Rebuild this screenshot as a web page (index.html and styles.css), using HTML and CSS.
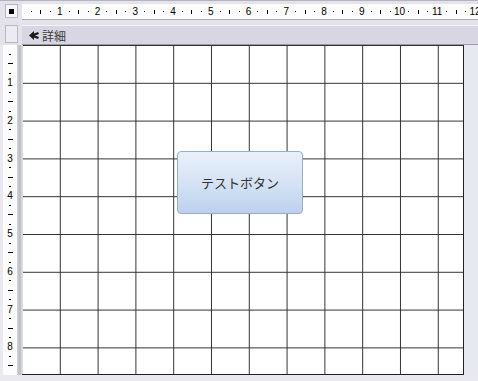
FILE: index.html
```html
<!DOCTYPE html>
<html lang="ja">

<head>
    <meta charset="UTF-8">
    <meta name="viewport" content="width=device-width, initial-scale=1.0">
    <title>フォーム デザイン</title>
    <link rel="stylesheet" href="styles.css">
</head>

<body>
    <div class="designer">
        <!-- top row: form selector + horizontal ruler -->
        <div class="top-row">
            <div class="corner"><div class="form-selector"><span class="dot"></span></div></div>
            <div class="h-ruler" id="hRuler"></div>
        </div>

        <!-- section header -->
        <div class="section-row">
            <div class="corner"><div class="section-selector"></div></div>
            <div class="section-bar">
                <svg class="section-icon" width="10" height="9" viewBox="0 0 10 9">
                    <path d="M0 4.5 L5 0 L5 2.5 L9 1 L10 3 L6 4.5 L10 6 L9 8 L5 6.5 L5 9 Z" fill="#1a1a1a" />
                </svg>
                <span class="section-title">詳細</span>
            </div>
        </div>

        <!-- detail body -->
        <div class="body-row">
            <div class="v-ruler" id="vRuler"></div>
            <div class="edge"></div>
            <div class="canvas">
                <button class="test-button">テストボタン</button>
            </div>
            <div class="outside"></div>
        </div>

        <div class="bottom-strip"></div>
    </div>

    <script>
        // build ruler marks: dot, tick, dot, number for every centimetre
        const hRuler = document.getElementById('hRuler');
        const vRuler = document.getElementById('vRuler');

        function fillRuler(ruler, slots, dir) {
            for (let i = 1; i <= slots; i++) {
                const slot = document.createElement('span');
                slot.className = 'slot';
                if (i % 4 === 0) {
                    slot.textContent = i / 4;
                    slot.classList.add('num');
                } else if (i % 2 === 0) {
                    slot.innerHTML = '<i class="' + dir + '-tick long"></i>';
                } else {
                    slot.innerHTML = '<i class="' + dir + '-tick"></i>';
                }
                ruler.appendChild(slot);
            }
        }

        fillRuler(hRuler, 48, 'h');
        fillRuler(vRuler, 35, 'v');
    </script>
</body>

</html>
```

FILE: styles.css
```css
body {
    margin: 0;
    background: #e9e9ef;
    font-family: "Liberation Sans", Arial, sans-serif;
}

.designer {
    width: 478px;
    height: 381px;
    display: flex;
    flex-direction: column;
    overflow: hidden;
    background: #e9e9ef;
}

/* ---------- top ruler row ---------- */
.top-row {
    height: 25px;
    display: flex;
    box-sizing: border-box;
    border-top: 1px solid #b4b4bc;
    background: #e4e3ec;
}

.corner {
    width: 22px;
    flex: none;
    display: flex;
    justify-content: center;
}

.form-selector {
    margin-top: 3px;
    width: 13px;
    height: 14px;
    box-sizing: border-box;
    border: 1px solid #b8b8c0;
    background: #f6f6f8;
    display: flex;
    align-items: center;
    justify-content: center;
}

.form-selector .dot {
    width: 5px;
    height: 5px;
    background: #000;
}

.h-ruler {
    flex: 1;
    margin-top: 3px;
    height: 15px;
    background: #fcfcfc;
    border-bottom: 1px solid #a9a9b2;
    display: flex;
    align-items: center;
    padding-left: 4.7px;
    overflow: hidden;
}

.h-ruler .slot {
    flex: none;
    width: 9.45px;
    height: 15px;
    font-size: 10px;
    line-height: 15px;
    color: #000;
    display: flex;
    justify-content: center;
    align-items: center;
}

.h-tick {
    display: block;
    width: 1px;
    height: 1px;
    background: #000;
}

.h-tick.long {
    height: 4px;
}

/* ---------- section header ---------- */
.section-row {
    height: 20px;
    display: flex;
    background: #e4e3ec;
}

.section-selector {
    width: 13px;
    height: 18px;
    box-sizing: border-box;
    border: 1px solid #b8b8c0;
    background: #ecebf2;
}

.section-bar {
    flex: 1;
    display: flex;
    align-items: center;
    gap: 3px;
    padding-left: 7px;
    background: #d8d6e3;
    border-top: 1px solid #f4f4f8;
    border-bottom: 1px solid #9a9aa6;
    box-sizing: border-box;
}

.section-title {
    font-family: "Noto Sans CJK JP", sans-serif;
    font-size: 12px;
    color: #3a3a3a;
}

/* ---------- detail body ---------- */
.body-row {
    height: 330px;
    display: flex;
}

.v-ruler {
    width: 14px;
    margin-left: 3px;
    background: #fcfcfc;
    display: flex;
    flex-direction: column;
    padding-top: 4.7px;
    overflow: hidden;
    flex: none;
}

.v-ruler .slot {
    flex: none;
    height: 9.45px;
    display: flex;
    align-items: center;
    justify-content: center;
    font-size: 10px;
    color: #000;
}

.v-tick {
    display: block;
    width: 2px;
    height: 1px;
    background: #000;
}

.v-tick.long {
    width: 5px;
}

.edge {
    width: 5px;
    flex: none;
    background: linear-gradient(90deg, #d4d4dc, #b8b8c2 60%, #e0e0e6);
}

.canvas {
    position: relative;
    width: 442px;
    flex: none;
    box-sizing: border-box;
    border-right: 1px solid #222;
    border-bottom: 1px solid #222;
    background-color: #fff;
    background-image:
        linear-gradient(90deg, #333 1px, transparent 1px),
        linear-gradient(180deg, #333 1px, transparent 1px);
    background-size: 37.8px 37.8px;
    background-position: 0 0;
    /* hide the grid line that would sit on the left edge */
    box-shadow: inset 1px 0 0 #dcdce2;
}

.outside {
    flex: 1;
    background: #e6e9f0;
}

.test-button {
    position: absolute;
    left: 155px;
    top: 106px;
    width: 126px;
    height: 63px;
    border: 1px solid #99aecb;
    border-radius: 4px;
    background: linear-gradient(180deg, #e9f0fa 0%, #d6e3f5 50%, #bcd0ee 100%);
    font-family: "Noto Sans CJK JP", sans-serif;
    font-size: 13px;
    color: #333;
    padding: 0;
}

.bottom-strip {
    flex: 1;
    background: #e9e9ef;
}
```
